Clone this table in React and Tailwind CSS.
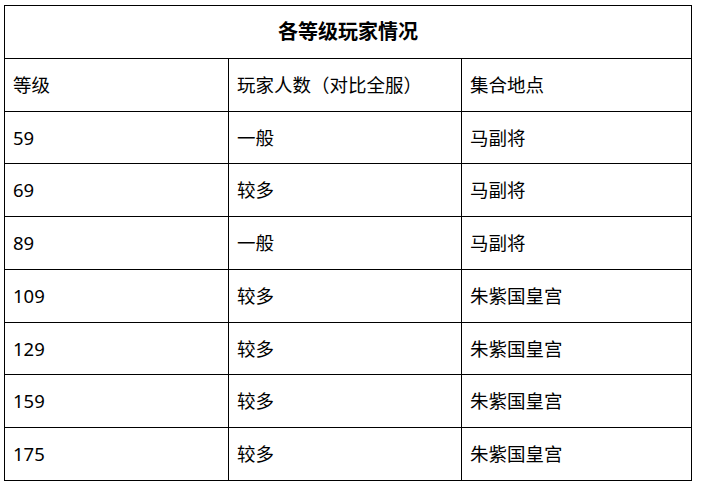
import React from "react";

const rows = [
  ["59", "一般", "马副将"],
  ["69", "较多", "马副将"],
  ["89", "一般", "马副将"],
  ["109", "较多", "朱紫国皇宫"],
  ["129", "较多", "朱紫国皇宫"],
  ["159", "较多", "朱紫国皇宫"],
  ["175", "较多", "朱紫国皇宫"],
];

export default function App() {
  const cell = "border border-black px-[8px] h-[52.75px] align-middle text-left font-normal";
  return (
    <div
      className="min-h-screen bg-white pt-[5px] pl-[4px] text-[18.5px] text-black"
      style={{ fontFamily: '"Noto Sans", "Noto Sans CJK SC", sans-serif' }}
    >
      <table className="border-collapse table-fixed w-[687px]">
        <colgroup>
          <col className="w-[224px]" />
          <col className="w-[233px]" />
          <col className="w-[230px]" />
        </colgroup>
        <thead>
          <tr>
            <th colSpan={3} className="border border-black h-[52.75px] text-center font-bold text-[20px]">
              各等级玩家情况
            </th>
          </tr>
          <tr>
            <td className={cell}>等级</td>
            <td className={cell}>玩家人数（对比全服）</td>
            <td className={cell}>集合地点</td>
          </tr>
        </thead>
        <tbody>
          {rows.map((r) => (
            <tr key={r[0]}>
              {r.map((c, i) => (
                <td key={i} className={cell}>
                  {c}
                </td>
              ))}
            </tr>
          ))}
        </tbody>
      </table>
    </div>
  );
}
